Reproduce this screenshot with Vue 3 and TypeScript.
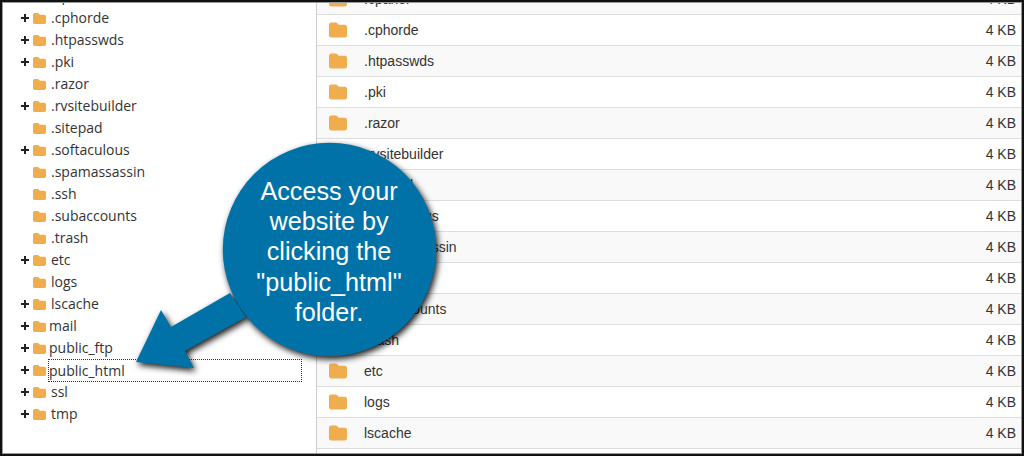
<script setup lang="ts">
interface TreeItem {
  name: string
  expandable: boolean
  tight?: boolean
  selected?: boolean
}

const treeItems: TreeItem[] = [
  { name: '.cpanel', expandable: true },
  { name: '.cphorde', expandable: true },
  { name: '.htpasswds', expandable: true },
  { name: '.pki', expandable: true },
  { name: '.razor', expandable: false },
  { name: '.rvsitebuilder', expandable: true },
  { name: '.sitepad', expandable: false },
  { name: '.softaculous', expandable: true },
  { name: '.spamassassin', expandable: false },
  { name: '.ssh', expandable: false },
  { name: '.subaccounts', expandable: false },
  { name: '.trash', expandable: false },
  { name: 'etc', expandable: true },
  { name: 'logs', expandable: false },
  { name: 'lscache', expandable: true },
  { name: 'mail', expandable: true, tight: true },
  { name: 'public_ftp', expandable: true, tight: true },
  { name: 'public_html', expandable: true, tight: true, selected: true },
  { name: 'ssl', expandable: true },
  { name: 'tmp', expandable: true },
]

const fileRows = [
  '.cpanel', '.cphorde', '.htpasswds', '.pki', '.razor', '.rvsitebuilder', '.sitepad', '.softaculous',
  '.spamassassin', '.ssh', '.subaccounts', '.trash', 'etc', 'logs', 'lscache', 'mail',
]

const folderPath = 'M3 0h6a3 3 0 0 1 2 1l2 2h8a3 3 0 0 1 3 3v11a3 3 0 0 1-3 3H3a3 3 0 0 1-3-3V3a3 3 0 0 1 3-3z'
</script>

<template>
  <div class="frame">
    <aside class="tree">
      <div v-for="item in treeItems" :key="item.name" class="tree-row">
        <span class="toggle">
          <svg v-if="item.expandable" class="plus" viewBox="0 0 8 8"><path d="M3 0h2v3h3v2H5v3H3V5H0V3h3z" /></svg>
        </span>
        <svg class="tree-folder" viewBox="0 0 24 20"><path :d="folderPath" /></svg>
        <span class="tree-label" :class="{ tight: item.tight, selected: item.selected }">{{ item.name }}</span>
      </div>
    </aside>

    <main class="files">
      <div v-for="name in fileRows" :key="name" class="file-row">
        <svg class="file-folder" viewBox="0 0 24 20"><path :d="folderPath" /></svg>
        <span class="file-name">{{ name }}</span>
        <span class="file-size">4 KB</span>
      </div>
    </main>

    <div class="callout">
      <svg class="callout-shape" viewBox="0 0 320 240">
        <path d="M100 153 41 187 31 170 6 222 64 228 55 211 116 177z" />
        <circle cx="199.5" cy="109.5" r="106.7" />
      </svg>
      <p class="callout-text">Access your<br />website by<br />clicking the<br />"public_html"<br />folder.</p>
    </div>
  </div>
</template>

<style>
html,
body {
  margin: 0;
  background: #fff;
}
</style>

<style scoped>
.frame {
  position: relative;
  box-sizing: border-box;
  display: flex;
  align-items: flex-start;
  width: 1024px;
  height: 456px;
  overflow: hidden;
  background: #fff;
  border: 2px solid #111;
}

/* thin grey inner edge of the screenshot frame */
.frame::after {
  content: "";
  position: absolute;
  inset: 0;
  border: 1px solid #9a9a9a;
  pointer-events: none;
}

.tree {
  flex: 0 0 314px;
  height: 480px;
  margin-top: -17px;
  border-right: 1px solid #ccc;
  font-family: "Open Sans", sans-serif;
  font-size: 14px;
  color: #333;
}

.tree-row {
  display: flex;
  align-items: center;
  height: 22px;
  padding-left: 17px;
}

.toggle {
  display: flex;
  flex: 0 0 12px;
  padding-left: 2px;
}

.plus {
  width: 8px;
  height: 8px;
  fill: #222;
}

.tree-folder {
  flex: none;
  width: 13px;
  height: 11px;
  fill: #f0ad4e;
}

.tree-label {
  box-sizing: border-box;
  margin-left: 2px;
  padding-left: 3px;
  line-height: 22px;
}

.tree-label.tight {
  padding-left: 1px;
}

.tree-label.selected {
  flex: 0 0 254px;
  height: 23px;
  padding-left: 0;
  line-height: 21px;
  border: 1px dotted #333;
}

.files {
  flex: 1;
  margin-top: -18px;
  font-family: "Liberation Sans", Arial, sans-serif;
  font-size: 14px;
  color: #333;
}

.file-row {
  box-sizing: border-box;
  display: flex;
  align-items: center;
  height: 31px;
  padding: 0 6px 0 12px;
  border-bottom: 1px solid #ddd;
}

.file-row:nth-child(odd) {
  background: #f9f9f9;
}

.file-folder {
  flex: none;
  width: 18px;
  height: 16px;
  fill: #f0ad4e;
}

.file-name {
  flex: 1;
  margin-left: 17px;
}

.callout {
  position: absolute;
  left: 128px;
  top: 138px;
  width: 320px;
  height: 240px;
}

.callout-shape {
  position: absolute;
  inset: 0;
  width: 100%;
  height: 100%;
  overflow: visible;
  fill: #0072a8;
  filter: drop-shadow(2px 3px 3px rgba(0, 0, 0, 0.9));
}

.callout-text {
  position: relative;
  width: 214px;
  margin: 36px 0 0 92px;
  font-family: "Liberation Sans", Arial, sans-serif;
  font-size: 25.2px;
  line-height: 30.2px;
  text-align: center;
  color: #fff;
}
</style>
